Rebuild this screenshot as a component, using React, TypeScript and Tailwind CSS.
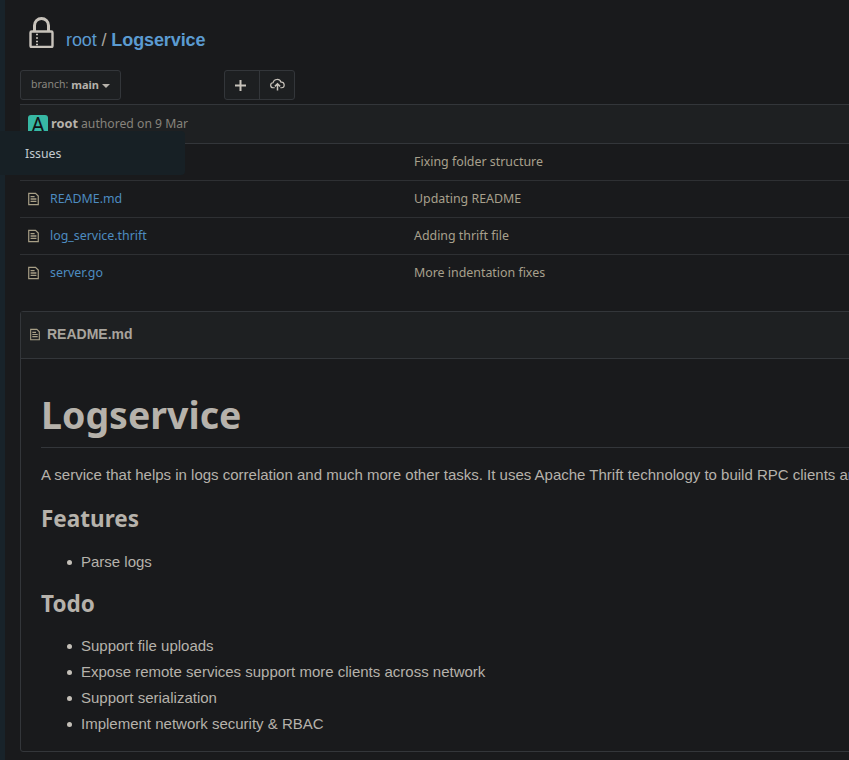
const noto = { fontFamily: '"Noto Sans", sans-serif' };

function FileIcon({ className = "" }: { className?: string }) {
  return (
    <svg viewBox="0 0 12 14" className={className} fill="none" stroke="currentColor" strokeWidth="1.3">
      <path d="M.8.8h7.4l3 3v9.4H.8z" />
      <path d="M2.8 4.5h4.4M2.8 7h6.4M2.8 9.5h6.4" strokeWidth="1.4" />
    </svg>
  );
}

function Bullet({ children }: { children: string }) {
  return (
    <li className="flex items-center">
      <span className="ml-[-14px] mr-[9px] h-[5px] w-[5px] rounded-full bg-[#c4c0b8]" />
      {children}
    </li>
  );
}

const files = [
  { name: "", message: "Fixing folder structure" },
  { name: "README.md", message: "Updating README" },
  { name: "log_service.thrift", message: "Adding thrift file" },
  { name: "server.go", message: "More indentation fixes" },
];

const todo = [
  "Support file uploads",
  "Expose remote services support more clients across network",
  "Support serialization",
  "Implement network security & RBAC",
];

export default function App() {
  return (
    <div className="relative h-[760px] w-[849px] overflow-hidden bg-[#191a1c] font-['Liberation_Sans',sans-serif] text-[#b6b2ab]">
      <div className="flex h-full">
        <div className="w-[5px] shrink-0 bg-[#18232a]" />
        <div className="w-[844px] shrink-0 overflow-hidden pl-[15px]">
          {/* Repo title */}
          <div className="flex h-[70px] items-start pl-[9px] pt-[17px]">
            <svg viewBox="0 0 25 31" className="h-[31px] w-[25px] text-[#c8c3bb]" fill="none" stroke="currentColor">
              <path d="M5.5 14V8.5a7 7 0 0 1 14 0V14" strokeWidth="3" />
              <rect x="1.5" y="14.5" width="22" height="15.5" rx="1.2" strokeWidth="2.4" />
              <path d="M7 17.5h2M7 21h2M7 24.5h2M7 27.5h2" strokeWidth="1.6" />
            </svg>
            <div className="ml-[12px] mt-[12px] text-[18px] leading-[22px] tracking-[-0.1px] text-[#5b9bd1]">
              root <span className="text-[#a9a59e]">/</span> <span className="font-bold">Logservice</span>
            </div>
          </div>

          {/* Toolbar */}
          <div className="flex h-[30px] w-[900px] items-stretch">
            <div
              style={noto}
              className="flex w-[101px] items-center justify-center rounded-[3px] border border-[#33363a] bg-[#1d1f21] text-[10.5px]"
            >
              <span className="text-[#8a8780]">branch:</span>
              <span className="ml-[3px] text-[11px] font-bold text-[#b6b2ab]">main</span>
              <span className="ml-[3px] mt-[2px] h-0 w-0 border-x-[4px] border-t-[4px] border-x-transparent border-t-[#b6b2ab]" />
            </div>
            <div className="ml-[103px] flex w-[71px] rounded-[3px] border border-[#33363a] bg-[#1d1f21]">
              <div className="flex w-[35px] items-center justify-center border-r border-[#33363a] pr-[3px]">
                <svg viewBox="0 0 11 11" className="h-[11px] w-[11px] text-[#c8c3bb]" stroke="currentColor" strokeWidth="2">
                  <path d="M5.5 0v11M0 5.5h11" />
                </svg>
              </div>
              <div className="flex flex-1 items-center justify-center pb-[2px]">
                <svg viewBox="0 0 16 14" className="h-[13px] w-[15px] text-[#c8c3bb]" fill="none" stroke="currentColor" strokeWidth="1.3">
                  <path d="M5 10.5H3.5a2.7 2.7 0 0 1-.3-5.4A4.5 4.5 0 0 1 11.8 4.5a3 3 0 0 1 .7 6H11" />
                  <path d="M8 13.5V6.5M5.2 9 8 6.2 10.8 9" strokeWidth="1.6" />
                </svg>
              </div>
            </div>
          </div>

          {/* Last commit */}
          <div
            style={noto}
            className="mt-[4px] flex h-[40px] w-[900px] items-center border-y border-[#33363a] bg-[#1e2022] pl-[8px] text-[12.2px]"
          >
            <div className="mt-[1px] flex h-[20px] w-[20px] items-center justify-center rounded-[3px] bg-[#37b8a4] pt-[2px] text-[21px] leading-none text-[#111315]">
              A
            </div>
            <span className="ml-[3px] text-[12.8px] font-bold text-[#b6b2ab]">root</span>
            <span className="ml-[3px] text-[#86837c]">authored on 9 Mar</span>
          </div>

          {/* File list */}
          <div style={noto} className="w-[900px] text-[12.4px]">
            {files.map((file, i) => (
              <div
                key={file.message}
                className={i < files.length - 1 ? "flex h-[37px] items-center border-b border-[#2e3033]" : "flex h-[37px] items-center"}
              >
                <div className="flex w-[394px] items-center pl-[8px]">
                  {file.name && <FileIcon className="h-[14px] w-[11px] text-[#a89f86]" />}
                  <span className="ml-[11px] text-[#4d8cc0]">{file.name}</span>
                </div>
                <span className="text-[#a8a08c]">{file.message}</span>
              </div>
            ))}
          </div>

          {/* README */}
          <div className="mt-[19px] h-[441px] w-[900px] rounded-[3px] border border-[#33363a]">
            <div className="flex h-[47px] items-center border-b border-[#33363a] bg-[#1e2022] pb-[2px] pl-[9px]">
              <FileIcon className="h-[13px] w-[10px] text-[#a89f86]" />
              <span className="ml-[7px] text-[14px] font-bold text-[#a8a49d]">README.md</span>
            </div>
            <div className="pl-[20px] pt-[26px]">
              <h1 style={noto} className="w-[808px] border-b border-[#33363a] pb-[2px] text-[37.5px] font-bold leading-[60px] text-[#b6b2ab]">
                Logservice
              </h1>
              <p className="mt-[16px] whitespace-nowrap text-[15px] leading-[22px]">
                A service that helps in logs correlation and much more other tasks. It uses Apache Thrift technology to build RPC clients and servers.
              </p>
              <h2 style={noto} className="mt-[18px] text-[22.5px] font-bold leading-[30px]">Features</h2>
              <ul className="mt-[15px] pl-[40px] text-[15px] leading-[26px]">
                <Bullet>Parse logs</Bullet>
              </ul>
              <h2 style={noto} className="mt-[14px] text-[22.5px] font-bold leading-[30px]">Todo</h2>
              <ul className="mt-[14px] pl-[40px] text-[15px] leading-[26px]">
                {todo.map((item) => (
                  <Bullet key={item}>{item}</Bullet>
                ))}
              </ul>
            </div>
          </div>
        </div>
      </div>

      {/* Hover menu from the collapsed sidebar */}
      <div
        style={noto}
        className="absolute left-0 top-[131px] flex h-[44px] w-[185px] items-center rounded-r-[4px] bg-[#172025] pl-[25px] pt-[2px] text-[12.3px] text-[#c3cbd0]"
      >
        Issues
      </div>
    </div>
  );
}
